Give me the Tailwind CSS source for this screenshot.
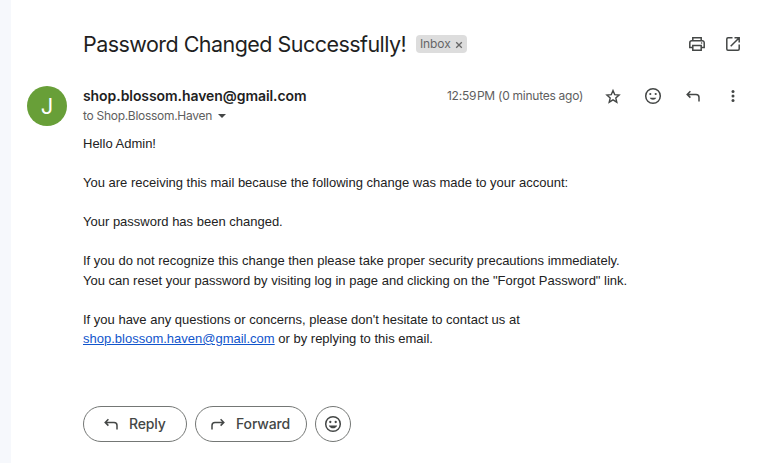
<!DOCTYPE html>
<html lang="en">
<head>
<meta charset="utf-8">
<title>Password Changed Successfully!</title>
<script src="https://cdn.jsdelivr.net/npm/@tailwindcss/browser@4"></script>
</head>
<body class="bg-white overflow-hidden">
<svg class="hidden">
  <symbol id="smile" viewBox="0 0 20 20"><circle cx="10" cy="10" r="7.3" fill="none" stroke="currentColor" stroke-width="1.5"/><circle cx="7.3" cy="8" r="1.15"/><circle cx="12.7" cy="8" r="1.15"/><path d="M5.8 11.4h8.4c-.7 1.8-2.3 2.9-4.2 2.9s-3.500-1.100-4.200-2.900z"/></symbol>
  <symbol id="smile-light" viewBox="0 0 20 20"><circle cx="10" cy="10" r="7.3" fill="none" stroke="currentColor" stroke-width="1.5"/><circle cx="7.3" cy="8" r="1.1"/><circle cx="12.7" cy="8" r="1.1"/><path d="M6.700 11.700h6.600c-.6 1.300-1.800 2-3.300 2s-2.700-.7-3.300-2z"/></symbol>
  <symbol id="reply" viewBox="0 0 20 20"><path d="M7.400 5.200 4.200 8.400l3.200 3.200M4.400 8.400h8.600a3 3 0 0 1 3 3v4" fill="none" stroke="currentColor" stroke-width="1.500"/></symbol>
</svg>
<div class="flex w-[764px] h-[463px] font-['Inter',sans-serif]">
  <div class="w-[11px] shrink-0 bg-[#f6f8fc]"></div>
  <main class="flex-1 pl-4 pr-[21px] pt-6 text-[#444746]">
    <header class="flex items-center h-10 pl-14">
      <h1 class="text-[21.500px] leading-7 tracking-[-0.540px] text-[#1f1f1f] whitespace-nowrap w-[324px] pb-px">Password Changed Successfully!</h1>
      <div class="ml-[9px] flex items-center h-[18px] w-[51px] rounded bg-[#ddd] text-[#666] pl-1 text-[12px] tracking-[-0.1px]"><span class="w-[31px]">Inbox</span>
        <svg class="ml-[4px] mt-px size-2" viewBox="0 0 8 8" fill="none" stroke="currentColor" stroke-width="1.300"><path d="m1.200 1.200 5.600 5.600m0-5.600L1.200 6.800"/></svg></div>
      <div class="ml-auto flex gap-4">
        <svg class="size-5" viewBox="0 0 20 20" fill="none" stroke="currentColor" stroke-width="1.500"><path d="M5.800 6.500V3.700h8.400v2.800M5.500 13.500H2.800V8.700a2 2 0 0 1 2-2h10.400a2 2 0 0 1 2 2v4.800h-2.700M5.800 11.500h8.400v4.800H5.800z"/><circle cx="14.600" cy="9" r=".8" fill="currentColor" stroke="none"/></svg>
        <svg class="size-5" viewBox="0 0 20 20" fill="none" stroke="currentColor" stroke-width="1.500"><path d="M9.500 3.800H5A1.200 1.200 0 0 0 3.800 5v10A1.200 1.200 0 0 0 5 16.200h10a1.200 1.200 0 0 0 1.200-1.200v-4.500M11.500 3.800h4.700v4.700M16 4l-8.300 8.300"/></svg>
      </div>
    </header>
    <section class="flex mt-[22px] h-[44px]">
      <div class="size-10 rounded-full bg-[#689f38] text-white text-[22px] flex items-center justify-center shrink-0">J</div>
      <div class="ml-4">
        <div class="text-[14px] leading-5 font-semibold text-[#1f1f1f] w-[224px] whitespace-nowrap tracking-[-0.070px]">shop.blossom.haven@gmail.com</div>
        <div class="flex items-center text-[12px] leading-5 text-[#5e5e5e]"><span class="w-[129px] whitespace-nowrap tracking-[-0.290px]">to Shop.Blossom.Haven</span><svg class="ml-1.5 w-2 h-1" viewBox="0 0 8 4" fill="#444746"><path d="M0 0h8L4 4z"/></svg></div>
      </div>
      <div class="ml-auto h-5 flex items-center">
        <span class="text-[12px] leading-5 text-[#5e5e5e] w-[136px] whitespace-nowrap tracking-[-0.260px]">12:59&#8202;PM (0 minutes ago)</span>
        <div class="ml-5 flex gap-5 items-center">
          <svg class="size-5" viewBox="0 0 20 20" fill="none" stroke="currentColor" stroke-width="1.400"><path d="m10 4.600 1.700 4 4.400.4-3.300 2.900 1 4.300-3.800-2.300-3.800 2.300 1-4.300-3.300-2.900 4.400-.4z"/></svg>
          <svg class="size-5" fill="currentColor"><use href="#smile-light"/></svg>
          <svg class="size-5"><use href="#reply"/></svg>
          <svg class="size-5" viewBox="0 0 20 20" fill="currentColor"><circle cx="10" cy="5.500" r="1.500"/><circle cx="10" cy="10" r="1.500"/><circle cx="10" cy="14.500" r="1.500"/></svg>
        </div>
      </div>
    </section>
    <article class="ml-14 mt-[4px] h-[272px] font-['Liberation_Sans',Arial,sans-serif] text-[13px] leading-[19.500px] text-[#222] whitespace-nowrap">
      <p>Hello Admin!</p>
      <p class="mt-[19.500px]">You are receiving this mail because the following change was made to your account:</p>
      <p class="mt-[19.500px]">Your password has been changed.</p>
      <p class="mt-[19.500px]">If you do not recognize this change then please take proper security precautions immediately.<br>You can reset your password by visiting log in page and clicking on the "Forgot Password" link.</p>
      <p class="mt-[19.500px]">If you have any questions or concerns, please don't hesitate to contact us at<br><a class="text-[#1155cc] underline" href="#">shop.blossom.haven@gmail.com</a> or by replying to this email.</p>
    </article>
    <footer class="ml-14 flex gap-2 text-[14px] tracking-[-0.150px] font-medium">
      <button class="w-[104px] h-9 rounded-full border border-[#747775] flex items-center pl-[17px]"><svg class="size-5 mr-2"><use href="#reply"/></svg><span class="pb-0.5">Reply</span></button>
      <button class="w-[112px] h-9 rounded-full border border-[#747775] flex items-center pl-3"><svg class="size-5 mr-2 -scale-x-100"><use href="#reply"/></svg><span class="pb-0.5">Forward</span></button>
      <button class="size-9 rounded-full border border-[#747775] flex items-center justify-center"><svg class="size-5" fill="currentColor"><use href="#smile"/></svg></button>
    </footer>
  </main>
</div>
</body>
</html>
